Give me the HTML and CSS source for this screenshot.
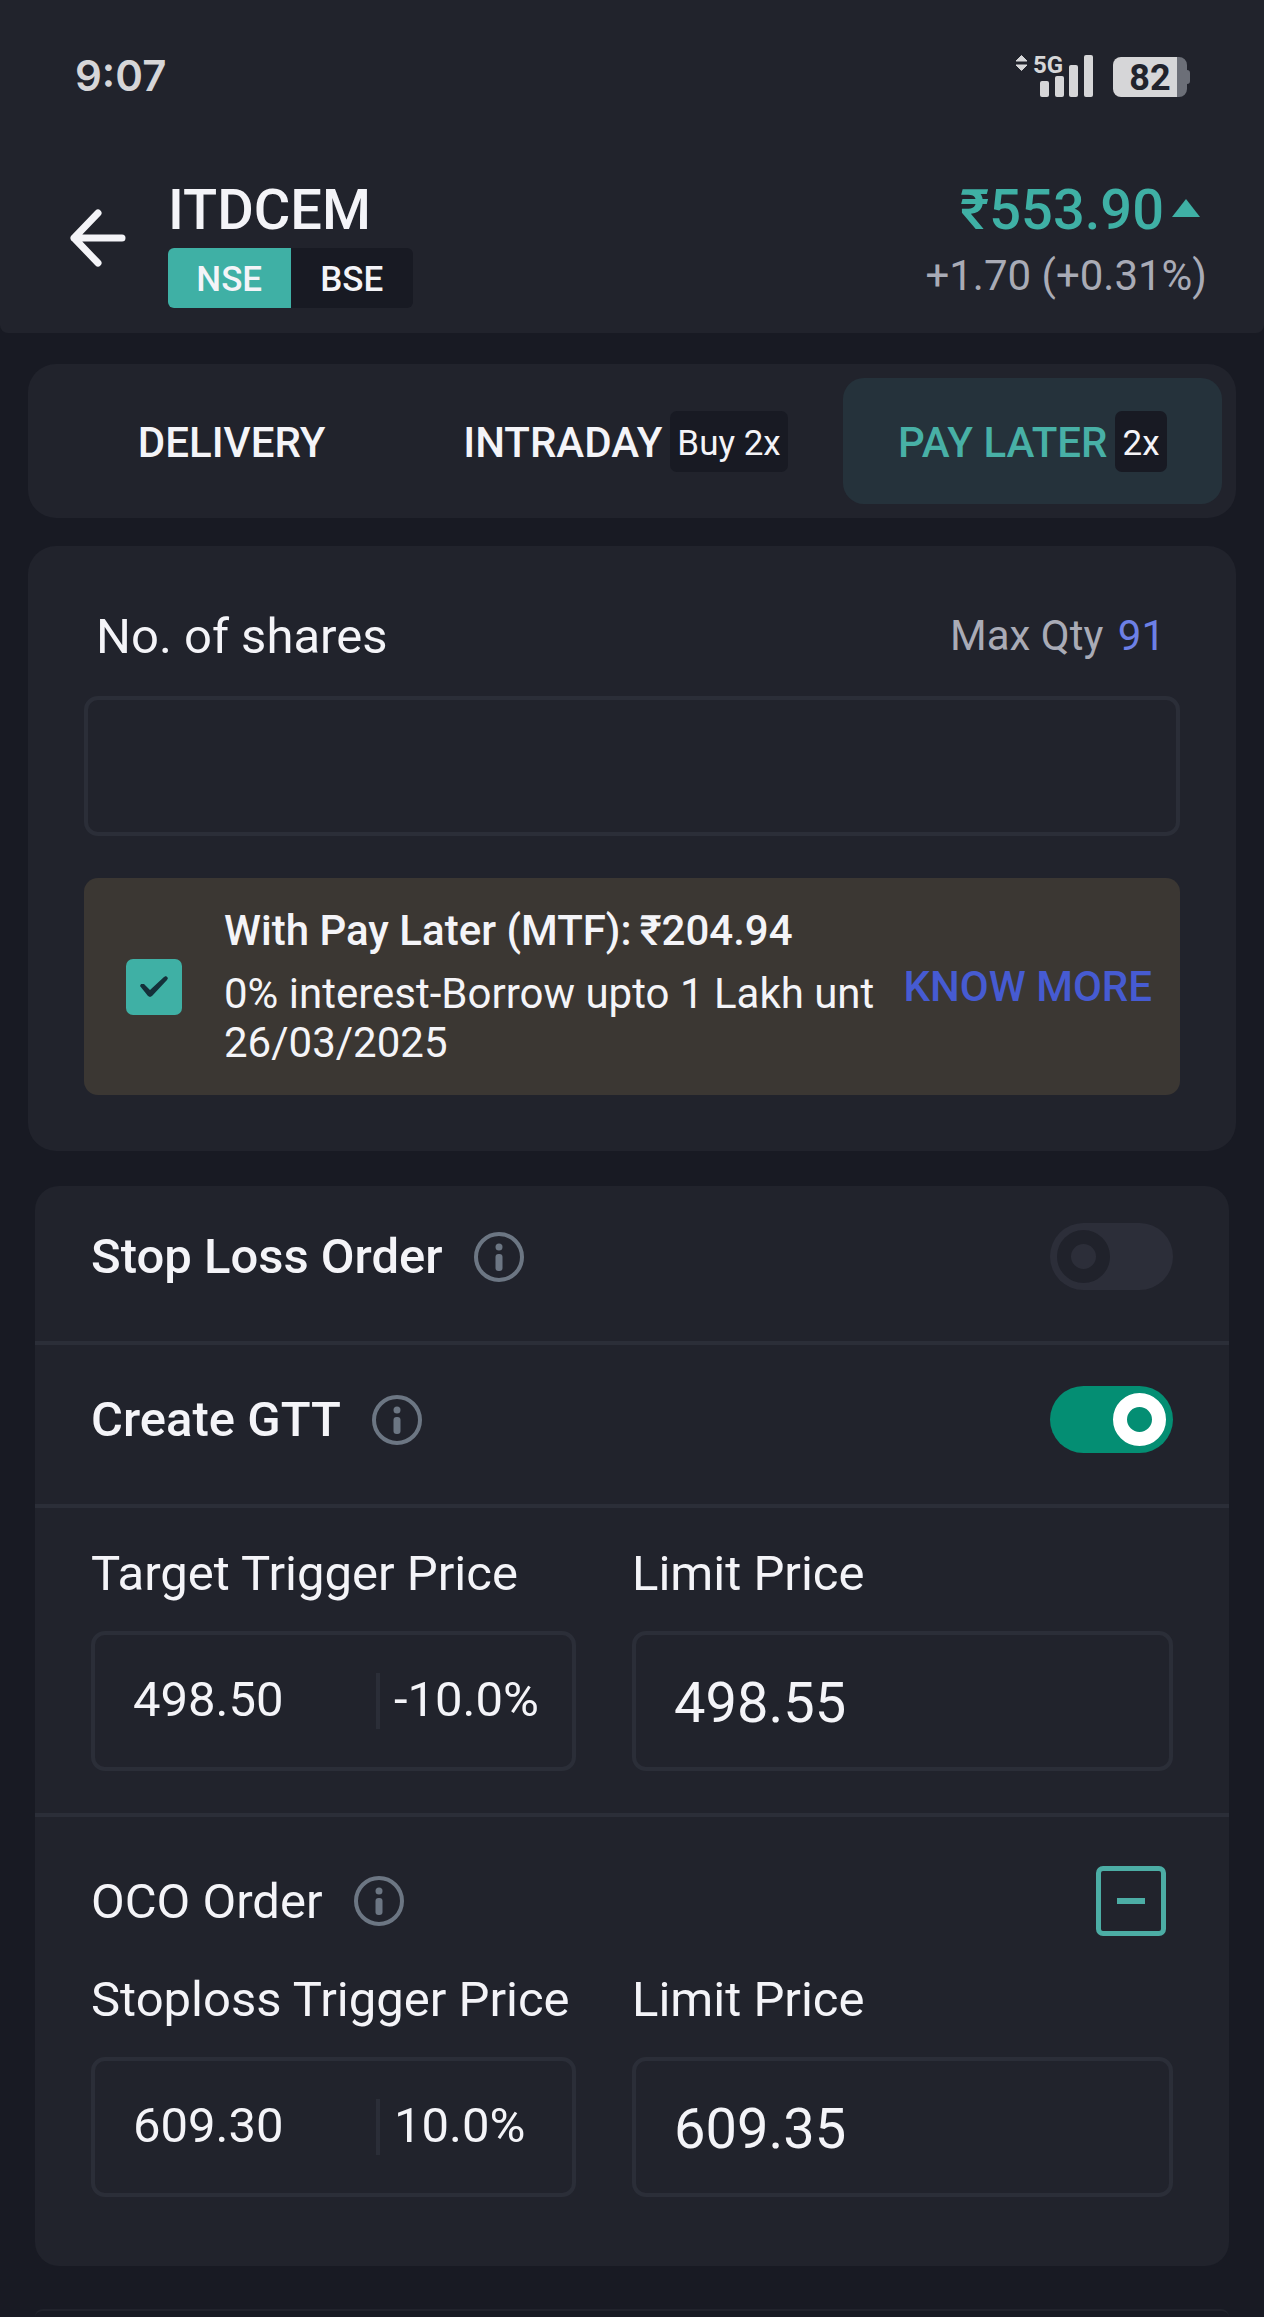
FILE: index.html
```html
<!DOCTYPE html>
<html lang="en">
<head>
<meta charset="utf-8">
<meta name="viewport" content="width=device-width, initial-scale=1">
<title>ITDCEM order</title>
<link rel="stylesheet" href="styles.css">
</head>
<body>
<svg class="defs" width="0" height="0" aria-hidden="true">
  <symbol id="info" viewBox="0 0 50 50">
    <circle cx="25" cy="25" r="23" fill="none" stroke="currentColor" stroke-width="4"/>
    <circle cx="25" cy="15" r="3.5" fill="currentColor"/>
    <rect x="21.5" y="22" width="7" height="17" rx="3" fill="currentColor"/>
  </symbol>
</svg>

<div class="status">
  <span class="clock">9:07</span>
  <div class="status-icons">
    <svg width="80" height="60" viewBox="0 -8 80 60" role="img" aria-label="5G signal">
      <g fill="#d6d6d8">
        <path d="M1 8 6.500 2.500 12 8zM1 12h11L6.500 17.500z" stroke="#d6d6d8" stroke-width="1" stroke-linejoin="round"/>
        <text class="net" x="18" y="20">5G</text>
        <rect x="25" y="28" width="9" height="16" rx="2"/>
        <rect x="40" y="23" width="9" height="21" rx="2"/>
        <rect x="54" y="12" width="9" height="32" rx="2"/>
        <rect x="69" y="2" width="9" height="42" rx="2"/>
      </g>
    </svg>
    <svg width="78" height="60" viewBox="0 -8 78 60" role="img" aria-label="Battery 82 percent">
      <path d="M64 4h2a8 8 0 0 1 8 8v5a3 3 0 0 1 3 3v8a3 3 0 0 1-3 3v5a8 8 0 0 1-8 8h-2z" fill="#6c6f78"/>
      <path d="M8 4h56v40H8a8 8 0 0 1-8-8V12A8 8 0 0 1 8 4z" fill="#d6d6d8"/>
      <text class="charge" x="37" y="37" text-anchor="middle">82</text>
    </svg>
  </div>
</div>

<header class="header">
  <button class="back" type="button" aria-label="Back">
    <svg width="56" height="58" viewBox="0 0 56 58" fill="none" stroke="#f4f4f8" stroke-width="7" stroke-linecap="round" stroke-linejoin="round"><path d="M28 4 4 29 28 54M4 29h48"/></svg>
  </button>
  <div class="stock">
    <h1 class="symbol">ITDCEM</h1>
    <div class="exchanges">
      <button class="exchange exchange-on" type="button">NSE</button>
      <button class="exchange" type="button">BSE</button>
    </div>
  </div>
  <div class="quote">
    <div class="price">₹553.90<svg width="28" height="18" viewBox="0 0 28 18" aria-hidden="true"><path d="M14 0 28 18H0z" fill="#3fb0a5"/></svg></div>
    <div class="change">+1.70 (+0.31%)</div>
  </div>
</header>

<main class="main">
  <nav class="tabs">
    <button class="tab" type="button">DELIVERY</button>
    <button class="tab tab-wide" type="button">INTRADAY <span class="badge">Buy 2x</span></button>
    <button class="tab tab-on" type="button">PAY LATER <span class="badge">2x</span></button>
  </nav>

  <section class="card">
    <div class="shares-head">
      <label class="label" for="shares">No. of shares</label>
      <div class="max">Max Qty <a class="max-value" href="#shares">91</a></div>
    </div>
    <input class="field shares" id="shares" type="text">
    <div class="mtf">
      <input class="tick" id="mtf" type="checkbox" checked>
      <label class="mtf-text" for="mtf"><strong class="mtf-title">With Pay Later (MTF):<span class="mtf-price">₹204.94</span></strong>0% interest-Borrow upto 1 Lakh unt<br>26/03/2025</label>
      <a class="more" href="#mtf">KNOW MORE</a>
    </div>
  </section>

  <section class="options">
    <div class="row row-first">
      <label class="label strong" for="stoploss">Stop Loss Order</label>
      <svg class="info" role="img" aria-label="Info"><use href="#info"/></svg>
      <input class="switch" id="stoploss" type="checkbox">
    </div>
    <div class="row">
      <label class="label strong" for="gtt">Create GTT</label>
      <svg class="info" role="img" aria-label="Info"><use href="#info"/></svg>
      <input class="switch" id="gtt" type="checkbox" checked>
    </div>
    <div class="target">
      <div class="prices">
        <label class="label" for="target">Target Trigger Price</label>
        <label class="label" for="limit">Limit Price</label>
        <div class="field trigger">
          <input class="amount" id="target" type="text" value="498.50">
          <input class="percent" type="text" value="-10.0%" aria-label="Target percent">
        </div>
        <input class="field limit" id="limit" type="text" value="498.55">
      </div>
    </div>
    <div class="oco">
      <div class="oco-head">
        <span class="label">OCO Order</span>
        <svg class="info" role="img" aria-label="Info"><use href="#info"/></svg>
        <button class="minus" type="button" aria-label="Remove OCO order"><span class="dash"></span></button>
      </div>
      <div class="prices">
        <label class="label" for="sl">Stoploss Trigger Price</label>
        <label class="label" for="sl-limit">Limit Price</label>
        <div class="field trigger">
          <input class="amount" id="sl" type="text" value="609.30">
          <input class="percent" type="text" value="10.0%" aria-label="Stoploss percent">
        </div>
        <input class="field limit" id="sl-limit" type="text" value="609.35">
      </div>
    </div>
  </section>
</main>
<footer class="next"></footer>
</body>
</html>
```
FILE: styles.css
```css
*, *::before { box-sizing: border-box; }
body {
  margin: 0;
  background: #181a23;
  color: #f4f4f8;
  font-family: Roboto, "Liberation Sans", sans-serif;
  font-size: 42px;
  line-height: 50px;
}
button, input { font: inherit; color: inherit; margin: 0; padding: 0; border: 0; background: none; min-width: 0; }
a { text-decoration: none; }
.defs { position: absolute; }

.status {
  display: flex;
  justify-content: space-between;
  align-items: center;
  height: 140px;
  padding: 0 73px 0 75px;
  background: #21232c;
}
.clock { padding-top: 12px; font-family: Inter, sans-serif; font-weight: 600; color: #d6d6d8; }
.status-icons { display: flex; gap: 18px; padding-top: 10px; }
.net { font: 700 24px Roboto, sans-serif; }
.charge { font: 700 36px Roboto, sans-serif; fill: #21232c; }

.header {
  display: flex;
  padding: 36px 57px 25px 70px;
  background: #21232c;
  border-radius: 0 0 8px 8px;
}
.back { width: 56px; padding-bottom: 8px; }
.back svg { display: block; }
.stock { margin-left: 42px; }
.symbol { margin: 0 0 4px; font-size: 56px; line-height: 68px; font-weight: 500; }
.exchanges { display: flex; width: 245px; border-radius: 6px; overflow: hidden; background: #181a23; }
.exchange { flex: 1; height: 60px; padding-top: 4px; font-size: 35px; font-weight: 500; }
.exchange-on { background: #3fb0a5; }
.quote { margin-left: auto; text-align: right; }
.price { display: flex; justify-content: flex-end; align-items: center; gap: 8px; padding-right: 7px; font-size: 56px; line-height: 68px; font-weight: 500; color: #3fb0a5; }
.price svg { margin-bottom: 4px; }
.change { line-height: 64px; color: #a9abb6; }

.main { padding: 31px 28px 43px; }
.tabs {
  display: grid;
  grid-template-columns: repeat(3, 1fr);
  gap: 21px;
  padding: 14px;
  margin-bottom: 28px;
  border-radius: 28px;
  background: #21232c;
}
.tab { display: flex; justify-content: center; align-items: center; gap: 8px; height: 126px; padding-top: 4px; border-radius: 21px; font-weight: 500; white-space: nowrap; }
.tab-wide { padding-right: 13px; }
.tab-on { background: #25323b; color: #48b0a6; }
.badge { height: 61px; margin-bottom: 4px; padding: 4px 7px 0; border-radius: 7px; background: #181a23; color: #f4f4f8; font-size: 35px; line-height: 57px; font-weight: 400; }

.card { padding: 60px 56px 56px; border-radius: 28px; background: #21232c; }
.label { padding-top: 2px; font-size: 49px; line-height: 58px; }
.strong { font-weight: 500; padding: 0; }
.shares-head { display: flex; justify-content: space-between; padding: 0 15px 0 12px; margin-bottom: 30px; }
.max { line-height: 60px; color: #a9abb6; }
.max-value { color: #6d80e6; padding-left: 4px; }
.field { display: block; width: 100%; height: 140px; border: 4px solid #2b2e38; border-radius: 14px; }
.shares { padding: 0 38px; font-size: 56px; }
.mtf { display: flex; align-items: center; height: 217px; margin-top: 42px; padding: 0 28px 0 42px; border-radius: 14px; background: #3b3733; }
.tick, .switch { appearance: none; flex: none; display: grid; }
.tick { width: 56px; height: 56px; border-radius: 7px; background: #3fb0a5; place-items: center; }
.tick:checked::before { content: ""; width: 28px; height: 21px; background: #14303a; clip-path: polygon(0 10px, 1px 8px, 4px 8px, 10px 14px, 24px 1px, 26px 0, 28px 2px, 27px 4px, 12px 20px, 10px 21px, 8px 20px); }
.mtf-text { flex: 1; margin-left: 42px; line-height: 49px; white-space: nowrap; }
.mtf-title { display: block; margin-bottom: 14px; font-weight: 500; }
.mtf-price { margin-left: 8px; }
.more { color: #465bd2; font-weight: 500; white-space: nowrap; }

.options { margin: 35px 7px 0; border-radius: 24px; background: #21232c; }
.row { display: flex; align-items: center; padding: 41px 56px 51px; border-bottom: 4px solid #2b2e38; }
.row-first { padding-top: 37px; }
.info { width: 50px; height: 50px; margin-left: 31px; color: #6c7683; }
.switch { width: 123px; height: 67px; margin-left: auto; padding: 7px; border-radius: 34px; background: #2c2e39; }
.switch::before { content: ""; width: 53px; height: 53px; border: 14px solid #20222b; border-radius: 50%; }
.switch:checked { background: #048e73; justify-items: end; }
.switch:checked::before { border-color: #fff; }
.target { padding: 35px 56px 42px; border-bottom: 4px solid #2b2e38; }
.prices { display: grid; grid-template-columns: minmax(0, 485fr) minmax(0, 541fr); gap: 28px 56px; }
.prices .label { white-space: nowrap; }
.trigger { display: flex; align-items: center; padding-left: 38px; font-size: 49px; }
.amount { flex: 1; height: 100%; padding-bottom: 4px; }
.percent { width: 196px; height: 56px; padding: 0 0 4px 14px; border-left: 4px solid #2b2e38; }
.limit { padding: 4px 0 0 38px; font-size: 56px; }
.oco { padding: 49px 56px 69px; }
.oco-head { display: flex; align-items: center; margin-bottom: 33px; padding-right: 7px; }
.minus { display: grid; place-items: center; width: 70px; height: 70px; margin-left: auto; border: 5px solid #4cada5; border-radius: 7px; }
.dash { width: 28px; height: 6px; background: #4cada5; }
.next { height: 8px; margin: 0 35px; border-top: 2px solid #21232c; border-radius: 24px 24px 0 0; }
```
